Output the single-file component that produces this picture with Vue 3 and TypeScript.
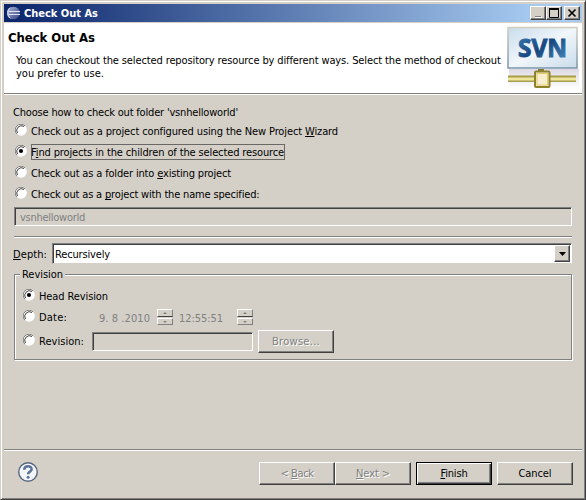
<script setup lang="ts">
import { ref } from 'vue'
import type { Directive } from 'vue'

interface Choice {
  before: string
  key: string
  after: string
  width: number
}

const choices: Choice[] = [
  { before: 'Check out as a project configured using the New Project ', key: 'W', after: 'izard', width: 307 },
  { before: 'F', key: 'i', after: 'nd projects in the children of the selected resource', width: 253 },
  { before: 'Check out as a folder into ', key: 'e', after: 'xisting project', width: 200 },
  { before: 'Check out as a ', key: 'p', after: 'roject with the name specified:', width: 228.5 },
]
const selected = ref(1)
const revisionMode = ref<'head' | 'date' | 'revision'>('head')

// Tracks a label out to a fixed width so dialog metrics hold with any fallback font.
const vFit: Directive<HTMLElement, number> = {
  mounted(el, binding) {
    const count = (el.textContent ?? '').length
    const natural = el.getBoundingClientRect().width
    el.style.letterSpacing = `${(binding.value - natural) / count}px`
  },
}
</script>

<template>
  <div class="window">
    <header class="titlebar">
      <svg class="app-icon" width="16" height="16" viewBox="0 0 16 16">
        <defs>
          <linearGradient id="orb" x1="0" y1="0" x2="1" y2="1">
            <stop offset="0" stop-color="#a9b4dc" />
            <stop offset="1" stop-color="#35407c" />
          </linearGradient>
        </defs>
        <circle cx="7.500" cy="8" r="6.300" fill="url(#orb)" />
        <path d="M5 2A6.500 6.500 0 0 0 5 14A9 9 0 0 1 5 2Z" fill="#c9cde6" />
        <path d="M3 6.500H14M3 9.500H14" stroke="#dfe4f5" stroke-width="1" />
      </svg>
      <span v-fit="74" class="title">Check Out As</span>
      <div class="controls">
        <button class="ctl"><svg width="12" height="10"><path d="M3 8h6v1H3z" fill="#808080" /><path d="M3 9h7v1H3z" fill="#fff" /></svg></button>
        <button class="ctl"><svg width="12" height="10"><path d="M1.5 1h9v8.5h-9zM1.5 1.5h9" fill="none" stroke="#000" /><path d="M1 0h10v2H1z" /></svg></button>
        <button class="ctl close"><svg width="12" height="10"><path d="M2.5 1.5l7 7M9.5 1.5l-7 7" stroke="#000" stroke-width="1.6" /></svg></button>
      </div>
    </header>

    <section class="banner">
      <div class="banner-text">
        <h1><span v-fit="87">Check Out As</span></h1>
        <p><span v-fit="484.5">You can checkout the selected repository resource by different ways. Select the method of checkout</span></p>
        <p><span v-fit="88">you prefer to use.</span></p>
      </div>
      <svg class="svn" width="75" height="66" viewBox="0 0 75 66">
        <defs>
          <linearGradient id="panel" x1="0" y1="0" x2="1" y2="1">
            <stop offset="0" stop-color="#c8dcec" />
            <stop offset=".5" stop-color="#f1f6fa" />
            <stop offset="1" stop-color="#c9dcea" />
          </linearGradient>
          <linearGradient id="edge" x1="0" y1="0" x2="0" y2="1">
            <stop offset="0" stop-color="#d2cdbd" />
            <stop offset="1" stop-color="#7895a8" />
          </linearGradient>
          <linearGradient id="letters" x1="0" y1="0" x2="1" y2="1">
            <stop offset="0" stop-color="#3d80b8" />
            <stop offset=".5" stop-color="#174781" />
            <stop offset="1" stop-color="#4f91c5" />
          </linearGradient>
          <linearGradient id="shade" x1="0" y1="0" x2="0" y2="1">
            <stop offset="0" stop-color="#cbc5d5" />
            <stop offset="1" stop-color="#fff" />
          </linearGradient>
        </defs>
        <path d="M3 43H73V64H3Z" fill="url(#shade)" opacity=".65" />
        <rect x="2" y="1.500" width="69" height="40.500" fill="url(#panel)" stroke="url(#edge)" stroke-width="1.5" />
        <text x="12" y="31" textLength="49" lengthAdjust="spacingAndGlyphs" class="svn-text" fill="url(#letters)" stroke="url(#letters)" stroke-width="1">SVN</text>
        <path d="M2 49.500H70V56H2Z" fill="#a79d4d" />
        <path d="M2 51.500H70V54.500H2Z" fill="#eee69a" />
        <path d="M32 43H38V47H32Z" fill="#817a36" />
        <rect x="29" y="45.500" width="14.500" height="15.500" rx="1" fill="#f7eed0" stroke="#8d812b" stroke-width="2" />
        <rect x="31" y="47.500" width="10.500" height="11.500" fill="none" stroke="#e4cc6a" />
      </svg>
    </section>

    <main class="body">
      <div class="prompt"><span v-fit="225">Choose how to check out folder 'vsnhelloworld'</span></div>
      <label v-for="(c, i) in choices" :key="c.key" class="choice" @click="selected = i">
        <svg class="radio" width="12" height="12" viewBox="0 0 12 12">
          <circle cx="6" cy="6" r="5.800" fill="#fff" />
          <path d="M1.900 10.100A5.600 5.600 0 0 1 10.100 1.900" fill="none" stroke="#808080" />
          <path d="M2.500 9A4.700 4.700 0 0 1 9 2.500" fill="none" stroke="#404040" />
          <circle v-if="selected === i" cx="6" cy="6" r="2.100" />
        </svg>
        <span v-fit="c.width" class="choice-text">{{ c.before }}<u>{{ c.key }}</u>{{ c.after }}</span>
        <svg v-if="selected === i" class="focus" width="256" height="17">
          <rect x=".5" y=".5" width="253" height="15" fill="none" stroke="#000" stroke-dasharray="1 1" />
        </svg>
      </label>
      <div class="field name-field"><span v-fit="65">vsnhelloworld</span></div>
      <div class="rule"></div>

      <div class="depth">
        <span class="depth-label"><span v-fit="34"><u>D</u>epth:</span></span>
        <div class="combo">
          <span v-fit="56">Recursively</span>
          <button class="drop"><svg width="7" height="4"><path d="M0 0h7L3.500 4z" /></svg></button>
        </div>
      </div>

      <fieldset class="group">
        <legend><span v-fit="41">Revision</span></legend>
        <div class="rev-row head-row" @click="revisionMode = 'head'">
          <svg class="radio" width="12" height="12" viewBox="0 0 12 12">
            <circle cx="6" cy="6" r="5.800" fill="#fff" />
            <path d="M1.900 10.100A5.600 5.600 0 0 1 10.100 1.900" fill="none" stroke="#808080" />
            <path d="M2.500 9A4.700 4.700 0 0 1 9 2.500" fill="none" stroke="#404040" />
            <circle v-if="revisionMode === 'head'" cx="6" cy="6" r="2.100" />
          </svg>
          <span v-fit="69">Head Revision</span>
        </div>
        <div class="rev-row date-row" @click="revisionMode = 'date'">
          <svg class="radio" width="12" height="12" viewBox="0 0 12 12">
            <circle cx="6" cy="6" r="5.800" fill="#fff" />
            <path d="M1.900 10.100A5.600 5.600 0 0 1 10.100 1.900" fill="none" stroke="#808080" />
            <path d="M2.500 9A4.700 4.700 0 0 1 9 2.500" fill="none" stroke="#404040" />
            <circle v-if="revisionMode === 'date'" cx="6" cy="6" r="2.100" />
          </svg>
          <span class="date-label"><span v-fit="28">Date:</span></span>
          <span class="date-value"><span v-fit="51">9. 8 .2010</span></span>
          <div class="spinner">
            <i><svg width="4" height="2"><path d="M0 2L2 0L4 2z" /></svg></i>
            <i><svg width="4" height="2"><path d="M0 0L2 2L4 0z" /></svg></i>
          </div>
          <span class="time-value"><span v-fit="44">12:55:51</span></span>
          <div class="spinner">
            <i><svg width="4" height="2"><path d="M0 2L2 0L4 2z" /></svg></i>
            <i><svg width="4" height="2"><path d="M0 0L2 2L4 0z" /></svg></i>
          </div>
        </div>
        <div class="rev-row number-row" @click="revisionMode = 'revision'">
          <svg class="radio" width="12" height="12" viewBox="0 0 12 12">
            <circle cx="6" cy="6" r="5.800" fill="#fff" />
            <path d="M1.900 10.100A5.600 5.600 0 0 1 10.100 1.900" fill="none" stroke="#808080" />
            <path d="M2.500 9A4.700 4.700 0 0 1 9 2.500" fill="none" stroke="#404040" />
            <circle v-if="revisionMode === 'revision'" cx="6" cy="6" r="2.100" />
          </svg>
          <span class="number-label"><span v-fit="45">Revision:</span></span>
          <div class="field number-field"></div>
          <button class="btn off"><span v-fit="48">Browse...</span></button>
        </div>
      </fieldset>
    </main>

    <footer class="footer">
      <svg class="help" width="21" height="21" viewBox="0 0 21 21">
        <circle cx="10" cy="10" r="9.300" fill="#f3f5f9" stroke="#59677f" stroke-width="1.4" />
        <path d="M6.300 7.700C6.300 3 13.800 3.200 13.600 7.200C13.500 9.700 10.100 9.500 10.100 12.300" fill="none" stroke="#5d7397" stroke-width="2.600" />
        <circle cx="10.100" cy="15.200" r="1.500" fill="#5d7397" />
      </svg>
      <button class="btn off back"><span v-fit="33">&lt; <u>B</u>ack</span></button>
      <button class="btn off next"><span v-fit="34"><u>N</u>ext &gt;</span></button>
      <button class="btn finish"><span v-fit="27">​<u>F</u>inish</span></button>
      <button class="btn"><span v-fit="33">Cancel</span></button>
    </footer>
  </div>
</template>

<style>
body {
  margin: 0;
  background: #d4d0c8;
}
</style>

<style scoped>
* {
  box-sizing: border-box;
}
.window {
  width: 586px;
  height: 500px;
  display: flex;
  flex-direction: column;
  background: #d4d0c8;
  border: 1px solid;
  border-color: #d4d0c8 #404040 #404040 #d4d0c8;
  box-shadow: inset 1px 1px #fff, inset -1px -1px #808080;
  padding: 3px 3px 2px;
  font: 11px/13px 'DejaVu Sans Condensed', 'DejaVu Sans', sans-serif;
  font-stretch: condensed;
  color: #000;
  overflow: hidden;
}
span {
  white-space: pre;
}
u {
  text-decoration: underline;
  text-decoration-thickness: 1px;
  text-underline-offset: 1px;
  text-decoration-skip-ink: none;
}
svg {
  display: block;
  flex: none;
}
button {
  font: inherit;
  color: inherit;
  padding: 0;
  margin: 0;
}
.titlebar {
  height: 18px;
  flex: none;
  display: flex;
  align-items: center;
  padding: 0 2px;
  background: linear-gradient(90deg, #0a246a, #a6caf0 92%);
}
.app-icon {
  margin-right: 2px;
}
.title {
  color: #fff;
  font-weight: bold;
}
.controls {
  display: flex;
  margin-left: auto;
}
.ctl,
.drop {
  width: 16px;
  height: 14px;
  display: flex;
  align-items: flex-start;
  justify-content: center;
  background: #d4d0c8;
  border: 1px solid;
  border-color: #fff #404040 #404040 #fff;
  box-shadow: inset -1px -1px #808080;
  padding-top: 1px;
}
.close {
  margin-left: 2px;
}
.banner {
  height: 73px;
  flex: none;
  display: flex;
  justify-content: space-between;
  background: #fff;
  border-top: 1px solid #d4d0c8;
  border-bottom: 1px solid #fff;
  box-shadow: inset 0 -1px #808080;
}
.banner-text {
  padding: 7px 0 0 4px;
}
h1 {
  margin: 0;
  font-size: 13px;
  line-height: 16px;
  font-weight: bold;
}
p {
  margin: 0 0 0 8px;
}
h1 + p {
  margin-top: 8px;
}
.svn {
  margin: 3px 1px 0 0;
}
.svn-text {
  font: bold 25px 'Noto Sans', sans-serif;
}
.body {
  flex: none;
  height: 354px;
  padding: 11px 10px 0;
}
.prompt {
  height: 18px;
  margin-left: -1px;
}
.choice {
  position: relative;
  display: flex;
  height: 21px;
  padding: 0 1px;
}
.choice-text {
  margin: 1px 0 0 4px;
}
.focus {
  position: absolute;
  left: 17px;
  top: -1px;
}
.field {
  background: #d4d0c8;
  border: 1px solid;
  border-color: #808080 #fff #fff #808080;
  box-shadow: inset 1px 1px #404040;
}
.name-field {
  height: 19px;
  margin-top: -1px;
  padding: 3px 5px;
  color: #808080;
}
.rule {
  height: 2px;
  margin-top: 10px;
  border-top: 1px solid #808080;
  border-bottom: 1px solid #fff;
}
.depth {
  display: flex;
  height: 21px;
  margin-top: 5px;
}
.depth-label {
  width: 39px;
  margin-left: -1px;
  padding-top: 5px;
}
.combo {
  flex: 1;
  display: flex;
  justify-content: space-between;
  background: #fff;
  border: 1px solid;
  border-color: #808080 #fff #d4d0c8 #808080;
  box-shadow: inset 1px 1px #404040;
  padding: 1px;
}
.combo > span {
  padding: 3px 0 0 1px;
}
.drop {
  height: 17px;
  padding-top: 6px;
}
.group {
  height: 92px;
  margin: 4px 0 0;
  padding: 0;
  border: 1px solid #808080;
  box-shadow: 1px 1px #fff, inset 1px 1px #fff;
  min-width: 0;
}
legend {
  margin-left: 5px;
  padding: 0 2px;
  height: 13px;
  background: #d4d0c8;
}
.rev-row {
  display: flex;
  align-items: flex-start;
  padding-left: 8px;
  height: 21px;
}
.rev-row > span {
  margin-left: 4px;
}
.head-row {
  margin-top: 8px;
}
.date-row > span,
.number-row > .number-label,
.head-row > span {
  padding-top: 1px;
}
.date-row > .date-label {
  width: 56px;
}
.date-row > .date-value {
  width: 58px;
  padding-top: 2px;
  color: #808080;
}
.date-row > .time-value {
  width: 58px;
  margin-left: 6px;
  padding-top: 2px;
  color: #808080;
}
.number-row {
  height: 24px;
  margin-top: 3px;
}
.number-row > .number-label {
  width: 53px;
}
.number-field {
  width: 161px;
  height: 19px;
  margin: -2px 5px 0 0;
}
.number-row .btn {
  margin-top: -4px;
}
.spinner {
  margin-top: -1px;
  width: 16px;
}
.spinner i {
  display: flex;
  justify-content: center;
  align-items: center;
  height: 8px;
  margin-bottom: 1px;
  border: 1px solid;
  border-color: #fff #808080 #404040 #fff;
}
.spinner i + i {
  height: 7px;
  border-bottom-color: #808080;
}
.spinner path {
  fill: #808080;
}
.btn {
  width: 76px;
  height: 23px;
  flex: none;
  background: #d4d0c8;
  border: 1px solid;
  border-color: #fff #404040 #404040 #fff;
  box-shadow: inset -1px -1px #808080;
}
.off {
  color: #808080;
  text-shadow: 1px 1px #fff;
}
.footer {
  flex: 1;
  display: flex;
  padding: 12px 9px 0 14px;
  border-top: 1px solid #808080;
  box-shadow: inset 0 1px #fff;
}
.help {
  margin-right: auto;
}
.next {
  margin-right: 5px;
}
.finish {
  margin-right: 5px;
  border-color: #000;
  box-shadow: inset 1px 1px #fff, inset -1px -1px #404040, inset -2px -2px #808080;
}
</style>
